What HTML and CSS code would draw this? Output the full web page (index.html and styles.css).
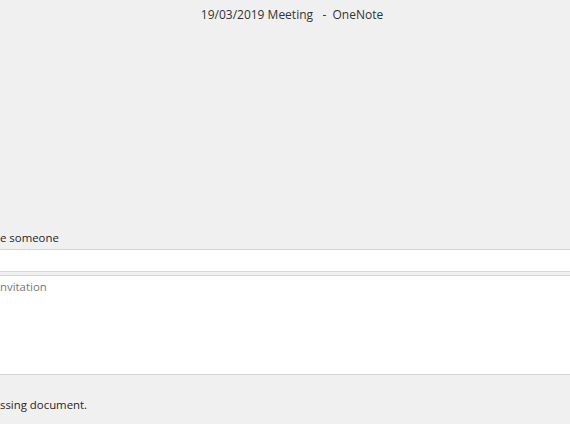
FILE: index.html
```html
<!DOCTYPE html>
<html>
<head>
<meta charset="utf-8">
<link rel="stylesheet" href="styles.css">
</head>
<body>
<div class="window">
  <div class="titlebar">19/03/2019 Meeting &nbsp; - &nbsp;OneNote</div>
  <div class="content">
    <div class="label">e someone</div>
    <div class="input"></div>
    <div class="textarea"><span class="placeholder">nvitation</span></div>
    <div class="status">ssing document.</div>
  </div>
</div>
</body>
</html>
```
FILE: styles.css
```css
html, body {
  margin: 0;
  padding: 0;
  background: #f0f0f0;
}
.window {
  width: 570px;
  height: 424px;
  font-family: "Open Sans", "Noto Sans", sans-serif;
  color: #262626;
  display: flex;
  flex-direction: column;
}
.titlebar {
  height: 32px;
  line-height: 30px;
  text-align: center;
  font-size: 12px;
  padding-left: 14px;
  color: #333;
}
.content {
  display: flex;
  flex-direction: column;
  padding-top: 197px;
}
.label {
  font-size: 11.4px;
  height: 20px;
  line-height: 18px;
}
.input {
  height: 21px;
  background: #fff;
  border-top: 1px solid #d6d6d6;
  border-bottom: 1px solid #d6d6d6;
}
.textarea {
  margin-top: 3px;
  height: 98px;
  background: #fff;
  border-top: 1px solid #d6d6d6;
  border-bottom: 1px solid #d6d6d6;
  font-size: 11.4px;
  line-height: 22px;
}
.placeholder {
  color: #767676;
}
.status {
  font-size: 11.4px;
  padding-top: 21px;
  line-height: 18px;
}
```
